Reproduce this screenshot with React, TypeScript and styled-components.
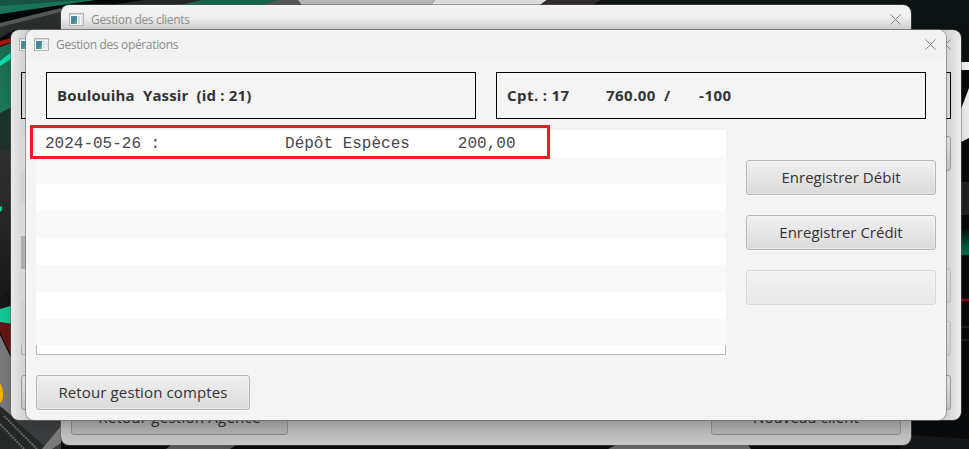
import React from "react";
import styled, { createGlobalStyle } from "styled-components";

const GlobalStyle = createGlobalStyle`
  * { box-sizing: border-box; }
  body { margin: 0; background: #080809; overflow: hidden; }
`;

const Desktop = styled.main`
  position: relative;
  width: 969px;
  height: 449px;
  overflow: hidden;
  font-family: "Noto Sans", "Open Sans", sans-serif;
  color: #333;
`;

const Wallpaper = styled.svg`
  display: block;
`;

const Window = styled.section<{ $x: number; $y: number; $w: number; $h: number; $bg: string; $shadow: string }>`
  position: absolute;
  left: ${(p) => p.$x}px;
  top: ${(p) => p.$y}px;
  width: ${(p) => p.$w}px;
  height: ${(p) => p.$h}px;
  display: flex;
  flex-direction: column;
  border-radius: 8px;
  background: ${(p) => p.$bg};
  box-shadow: ${(p) => p.$shadow};
`;

const TitleBar = styled.header<{ $dim?: boolean }>`
  display: flex;
  align-items: center;
  flex: 0 0 30px;
  height: 30px;
  padding: 0 10px 2px 8px;
  border-radius: 8px 8px 0 0;
  background: ${(p) => (p.$dim ? "transparent" : "#f2f2f2")};
`;

const Title = styled.span<{ $track: number }>`
  flex: 1;
  margin-left: 7px;
  padding-top: 2px;
  font: 12px/18px "Open Sans", sans-serif;
  letter-spacing: ${(p) => p.$track}px;
  white-space: nowrap;
  color: #8c8c8c;
`;

const Body = styled.div`
  flex: 1;
  display: flex;
  flex-direction: column;
  padding: 12px 10px 10px;
`;

const InfoRow = styled.div`
  display: flex;
  gap: 20px;
  padding: 0 10px;
`;

const InfoBox = styled.div`
  flex: 1;
  height: 47px;
  padding-left: 10px;
  border: 1px solid #000;
  font: bold 15px/45px "Open Sans", sans-serif;
  white-space: pre;
`;

const InfoText = styled.span<{ $track: number; $word?: number }>`
  letter-spacing: ${(p) => p.$track}px;
  word-spacing: ${(p) => p.$word ?? 0}px;
`;

const Middle = styled.div`
  display: flex;
  gap: 20px;
  margin-top: 11px;
`;

const OperationList = styled.div`
  display: flex;
  flex-direction: column;
  width: 690px;
  height: 225px;
  background: linear-gradient(#bababa, #bababa) 0 100% / 1px 10px no-repeat,
    linear-gradient(#bababa, #bababa) 100% 100% / 1px 10px no-repeat, #fff;
  border-bottom: 1px solid #bababa;
`;

const OperationRow = styled.div`
  flex: 0 0 27px;
  min-height: 0;
  padding: 2px 0 0 9px;
  font: 16px/25px "Liberation Mono", monospace;
  color: #484848;
  white-space: pre;
  background: #fff;
  &:nth-child(even) { background: #f9f9f9; }
  &:nth-child(8) { flex-basis: 26px; }
`;

const Actions = styled.div`
  display: flex;
  flex-direction: column;
  gap: 20px;
  padding-top: 30px;
`;

const Button = styled.button<{ $w: number; $track?: number }>`
  width: ${(p) => p.$w}px;
  height: 35px;
  padding: 0;
  border: 1px solid #b5b5b5;
  border-radius: 3px;
  background: linear-gradient(#f0f0f0, #dadada);
  box-shadow: inset 0 0 0 1px rgba(255, 255, 255, 0.3), 0 1px 0 #f9f9f9;
  font: 15px/31px "Open Sans", sans-serif;
  letter-spacing: ${(p) => p.$track ?? 0}px;
  color: #333;
  &:disabled { opacity: 0.4; }
`;

const Footer = styled.div`
  display: flex;
  justify-content: space-between;
  margin-top: auto;
`;

const ShadedButton = styled(Button)`
  border-color: #858585;
  background: linear-gradient(#888, #acacac);
  box-shadow: none;
  color: #282828;
`;

const Highlight = styled.div`
  position: absolute;
  left: 30px;
  top: 125px;
  width: 520px;
  height: 34px;
  border: 3px solid #ed1c24;
`;

/* Partly covered window: header box, a stripe list and a button column. */
const CoveredBody = styled(Body)`
  flex-direction: row;
  justify-content: space-between;
`;

const CoveredColumn = styled.div`
  display: flex;
  flex-direction: column;
  width: 60px;
`;

const CoveredBox = styled.div`
  height: 47px;
  border: 1px solid #000;
`;

const CoveredRow = styled.div<{ $h: number; $bg: string }>`
  height: ${(p) => p.$h}px;
  background: ${(p) => p.$bg};
`;

const CoveredFrame = styled.div`
  height: 10px;
  border: solid #aaa;
  border-width: 0 0 1px 1px;
`;

const CoveredButton = styled.div<{ $gap: number; $off?: boolean }>`
  height: 35px;
  margin-top: ${(p) => p.$gap}px;
  border: 1px solid #999;
  border-radius: 3px;
  background: linear-gradient(#ddd, #c5c5c5);
  opacity: ${(p) => (p.$off ? 0.4 : 1)};
`;

const AppIcon = () => (
  <svg width="15" height="13" viewBox="0 0 15 13">
    <defs>
      <linearGradient id="pane" x1="0" y1="0" x2="1" y2="1">
        <stop offset="0" stopColor="#5b86c0" />
        <stop offset="0.5" stopColor="#3f8796" />
        <stop offset="1" stopColor="#72b777" />
      </linearGradient>
    </defs>
    <rect x="0.5" y="0.5" width="14" height="12" fill="#f6f7f8" stroke="#b0b4b9" />
    <path d="M1 1.5H14" stroke="#d5dae0" />
    <rect x="2" y="3" width="6" height="8" fill="url(#pane)" />
    <rect x="9" y="3" width="2" height="8" fill="#d9dde3" />
    <rect x="12" y="3" width="2" height="8" fill="#e2e5e9" />
  </svg>
);

const CloseIcon = () => (
  <svg width="11" height="11" viewBox="0 0 11 11" fill="none" stroke="#8a8a8a" strokeWidth="1">
    <path d="M.5 .5L10.5 10.5M10.5 .5L.5 10.5" />
  </svg>
);

const Backdrop = () => (
  <Wallpaper width="969" height="449" viewBox="0 0 969 449">
    <defs>
      <linearGradient id="green" x1="0" y1="0" x2="0" y2="1">
        <stop offset="0" stopColor="#1b6b52" />
        <stop offset="1" stopColor="#1c7a5b" />
      </linearGradient>
      <linearGradient id="glow" x1="0" y1="0" x2="0" y2="1">
        <stop offset="0" stopColor="#07110e" />
        <stop offset="1" stopColor="#00734f" />
      </linearGradient>
      <linearGradient id="edge" x1="0" y1="0" x2="0" y2="1">
        <stop offset="0" stopColor="#303333" />
        <stop offset="1" stopColor="#181a1a" />
      </linearGradient>
    </defs>
    <rect width="969" height="449" fill="#090a0b" />
    <path d="M0 0H145L60 14L0 26Z" fill="#155343" />
    <path d="M0 6L85 0H100L0 18Z" fill="#1a745a" />
    <path d="M0 14L95 0H145L0 26Z" fill="#050808" />
    <path d="M0 25L61 12V30H14L0 38Z" fill="#292d2d" />
    <path d="M0 23L61 8V12L0 27Z" fill="#545756" />
    <path d="M0 41L12 38V42L0 46Z" fill="#a21b13" />
    <path d="M0 47L14 42V120H0Z" fill="url(#green)" />
    <path d="M0 61L14 50V57L0 66Z" fill="#00dfad" />
    <path d="M0 113L14 106V190H0Z" fill="#1d3330" />
    <path d="M0 150H14V300H0Z" fill="url(#edge)" />
    <path d="M0 207L2 206V210L0 212Z" fill="#00d89d" />
    <path d="M0 300L14 285V308L0 312Z" fill="#1a1414" />
    <path d="M0 322H14V362L0 332Z" fill="#611615" />
    <path d="M0 309L14 305V324L0 322Z" fill="#18c595" />
    <path d="M0 335L14 364V449H0Z" fill="#77797c" />
    <path d="M0 383Q5 392 2 401L0 403Z" fill="#ffad0b" />
    <path d="M0 406L12 416L60 449H0Z" fill="#252728" />
    <path d="M12 418H61V449H48Z" fill="#393b3c" />
    <path d="M42 449L61 426V443L52 449Z" fill="#77797b" />
    <path d="M0 424L24 449M4 416L37 449" stroke="#666968" strokeWidth="2" strokeDasharray="2 1" />
    <path d="M145 0H205L183 5H110Z" fill="#242727" />
    <path d="M202 0H277L262 5H180Z" fill="#14664a" />
    <path d="M277 0H300L303 5H261Z" fill="#555" />
    <path d="M298 0H435L431 5H302Z" fill="#b5b5b5" />
    <path d="M435 0H547L540 5H431Z" fill="#dadada" />
    <path d="M547 0H602L592 5H540Z" fill="#302b2b" />
    <path d="M602 0H969V62H961V30H911V5H594Z" fill="#0d1213" />
    <rect x="961" y="62" width="8" height="8" fill="#f4f4f4" />
    <path d="M969 88L961 109V142L969 138Z" fill="#eee" />
    <rect x="961" y="182" width="8" height="33" fill="#202122" />
    <rect x="961" y="229" width="8" height="26" fill="url(#glow)" />
    <path d="M961 255H969M961 327H969M961 340H969" stroke="#333" />
    <path d="M961 300H969" stroke="#780b10" strokeWidth="3" />
    <path d="M911 435L969 439V449H900Z" fill="#151617" />
    <path d="M171 445H236L230 449H166Z" fill="#555" />
    <path d="M616 445H748L751 449H608Z" fill="#686566" />
  </Wallpaper>
);

interface CaptionProps {
  text?: string;
  track?: number;
  dim?: boolean;
}

const Caption = ({ text, track = 0, dim }: CaptionProps) => (
  <TitleBar $dim={dim}>
    <AppIcon />
    <Title $track={track}>{text}</Title>
    <CloseIcon />
  </TitleBar>
);

const operation = "2024-05-26 :" + " ".repeat(13) + "Dépôt Espèces" + " ".repeat(5) + "200,00";
const rows = [operation, "", "", "", "", "", "", ""];

export default function App() {
  return (
    <>
      <GlobalStyle />
      <Desktop>
        <Backdrop />
        <Window
          $x={61} $y={5} $w={850} $h={440}
          $bg="linear-gradient(#f3f3f3 0, #f0f0f0 11px, #d2d2d2 25px, #c0c0c0 60px, #a8a8a8 415px, #c8c8c8 440px)"
          $shadow="0 0 0 1px rgba(90,90,90,.5)"
        >
          <Caption text="Gestion des clients" track={-0.34} dim />
          <Body>
            <Footer>
              <ShadedButton $w={217} $track={0.25}>Retour gestion Agence</ShadedButton>
              <ShadedButton $w={190} $track={0.1}>Nouveau client</ShadedButton>
            </Footer>
          </Body>
        </Window>

        <Window
          $x={11} $y={30} $w={950} $h={390}
          $bg="linear-gradient(90deg, #e9e9e9 0, #d0d0d0 15px, #d0d0d0 935px, #ededed 950px)"
          $shadow="0 0 0 1px rgba(100,100,100,.45), 0 2px 12px rgba(0,0,0,.15)"
        >
          <Caption dim />
          <CoveredBody>
            <CoveredColumn>
              <CoveredBox />
              <CoveredRow $h={18} $bg="transparent" />
              <CoveredRow $h={33} $bg="#dadada" />
              <CoveredRow $h={33} $bg="#d3d3d3" />
              <CoveredRow $h={33} $bg="#dadada" />
              <CoveredRow $h={33} $bg="#b0b0b0" />
              <CoveredRow $h={33} $bg="#d8d8d8" />
              <CoveredRow $h={43} $bg="#d2d2d2" />
              <CoveredFrame />
              <CoveredButton $gap={20} />
            </CoveredColumn>
            <CoveredColumn>
              <CoveredBox />
              <CoveredButton $gap={17} />
              <CoveredButton $gap={97} $off />
              <CoveredButton $gap={18} $off />
              <CoveredButton $gap={19} />
            </CoveredColumn>
          </CoveredBody>
        </Window>

        <Window
          $x={26} $y={30} $w={920} $h={390} $bg="#f4f4f4"
          $shadow="0 0 0 1px rgba(110,110,110,.6)"
        >
          <Caption text="Gestion des opérations" track={-0.34} />
          <Body>
            <InfoRow>
              <InfoBox><InfoText $track={0.15}>Boulouiha  Yassir  (id : 21)</InfoText></InfoBox>
              <InfoBox><InfoText $track={0.44} $word={-0.27}>{"Cpt. : 17         760.00  /       -100"}</InfoText></InfoBox>
            </InfoRow>
            <Middle>
              <OperationList>
                {rows.map((text, i) => (
                  <OperationRow key={i}>{text}</OperationRow>
                ))}
              </OperationList>
              <Actions>
                <Button $w={190} $track={0.03}>Enregistrer Débit</Button>
                <Button $w={190}>Enregistrer Crédit</Button>
                <Button $w={190} disabled aria-label="Action indisponible" />
              </Actions>
            </Middle>
            <Footer>
              <Button $w={214} $track={0.12}>Retour gestion comptes</Button>
            </Footer>
          </Body>
        </Window>

        <Highlight />
      </Desktop>
    </>
  );
}
